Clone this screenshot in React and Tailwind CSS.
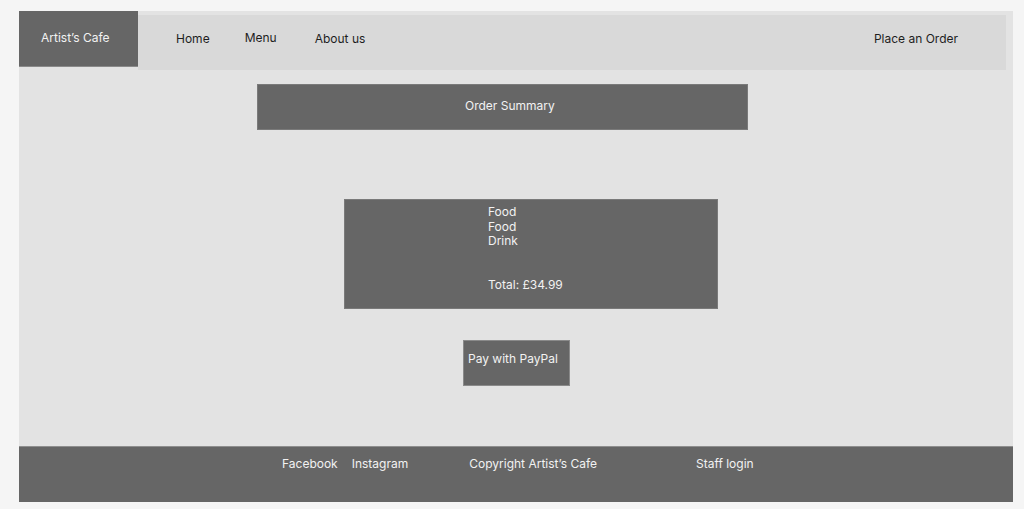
export default function App() {
  const font = { fontFamily: 'Inter, "Noto Sans", sans-serif' };
  return (
    <div className="w-[1024px] h-[509px] bg-[#f5f5f5] pt-[11px] pl-[19px] overflow-hidden" style={font}>
      <div className="w-[994px] h-[491px] bg-[#e3e3e3] flex flex-col">
        <div className="flex h-[59px]">
          <div className="w-[119px] h-[56px] bg-[#666666] flex items-center text-[12px] leading-[18px] text-[#f2f2f2] border-b border-[#8a8a8a]">
            <span className="ml-[22px] -mt-[2px]">Artist’s Cafe</span>
          </div>
          <div className="mt-[4px] h-[55px] w-[868px] bg-[#d9d9d9] flex items-center text-[12px] leading-[18px] text-[#1e1e1e]">
            <span className="ml-[38px] -mt-[8px]">Home</span>
            <span className="ml-[35px] -mt-[10px]">Menu</span>
            <span className="ml-[38px] -mt-[8px]">About us</span>
            <span className="ml-auto mr-[48px] -mt-[8px]">Place an Order</span>
          </div>
        </div>
        <div className="mt-[14px] ml-[238px] w-[491px] h-[46px] bg-[#666666] border border-[#7a7a7a] flex items-center text-[12px] leading-[18px] text-[#f2f2f2]">
          <span className="ml-[207px] -mt-[2px]">Order Summary</span>
        </div>
        <div className="mt-[69px] ml-[325px] w-[374px] h-[110px] bg-[#666666] border border-[#7a7a7a] text-[12px] leading-[14.5px] text-[#f2f2f2] pl-[143px] pt-[5px]">
          <div>Food</div>
          <div>Food</div>
          <div>Drink</div>
          <div className="mt-[29px]">Total: £34.99</div>
        </div>
        <div className="mt-[31px] ml-[444px] w-[107px] h-[46px] bg-[#666666] border border-[#8a8a8a] text-[12px] leading-[18px] text-[#f2f2f2] pl-[4px] pt-[9px]">
          Pay with PayPal
        </div>
        <div className="mt-auto h-[56px] bg-[#666666] border-t border-[#8f8f8f] flex text-[12px] leading-[18px] text-[#f2f2f2] pt-[8px]">
          <span className="ml-[263px]">Facebook</span>
          <span className="ml-[14px]">Instagram</span>
          <span className="ml-[61px]">Copyright Artist’s Cafe</span>
          <span className="ml-[99px]">Staff login</span>
        </div>
      </div>
    </div>
  );
}
